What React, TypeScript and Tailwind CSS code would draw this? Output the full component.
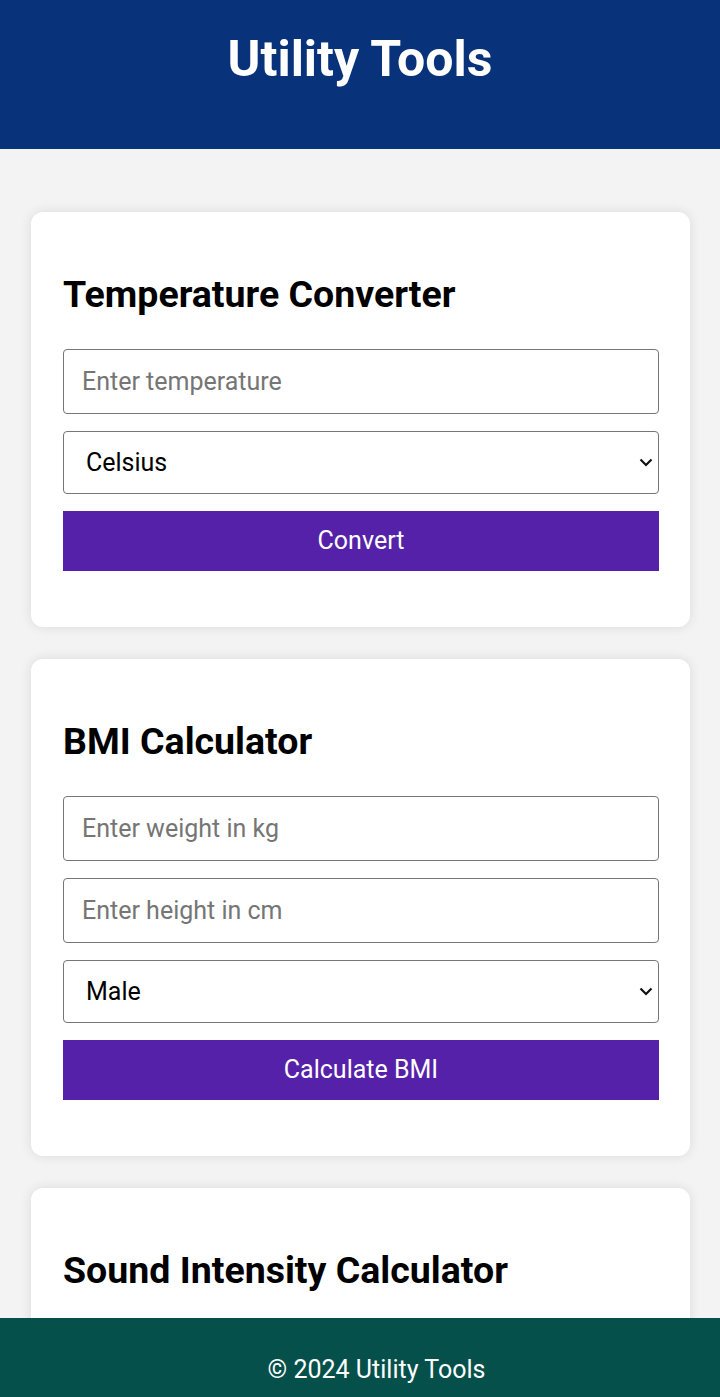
import { useState } from 'react'

const inputCls =
  'block w-full h-[65px] px-[18px] border border-[#767676] rounded-[4px] bg-white text-[25px] text-black placeholder:text-[#757575] outline-none'
const selectCls =
  'block w-full h-[63px] pl-[22px] pr-10 border border-[#767676] rounded-[4px] bg-white text-[25px] text-black appearance-none'
const buttonCls =
  'block w-full h-[60px] bg-[#5521a9] text-white text-[25px] leading-[30px] cursor-pointer'

function Card({ title, children }: { title: string; children: React.ReactNode }) {
  return (
    <section className="bg-white rounded-xl shadow-[0_0_12px_rgba(0,0,0,0.1)] pl-8 pr-[31px] pt-[61px] pb-[56px]">
      <h2 className="text-[37.5px] font-bold leading-[43px] text-black mb-[33px]">{title}</h2>
      <div className="flex flex-col gap-[17px]">{children}</div>
    </section>
  )
}

function Select({
  value,
  onChange,
  options,
}: {
  value: string
  onChange: (v: string) => void
  options: [string, string][]
}) {
  return (
    <div className="relative">
      <select value={value} onChange={(e) => onChange(e.target.value)} className={selectCls}>
        {options.map(([v, label]) => (
          <option key={v} value={v}>
            {label}
          </option>
        ))}
      </select>
      <svg
        className="pointer-events-none absolute right-[6px] top-[27px]"
        width="14"
        height="9"
        viewBox="0 0 14 9"
        fill="none"
      >
        <path d="M1.5 1.5 L7 7 L12.5 1.5" stroke="#111" strokeWidth="2.2" />
      </svg>
    </div>
  )
}

export default function App() {
  const [temp, setTemp] = useState('')
  const [unit, setUnit] = useState('celsius')
  const [weight, setWeight] = useState('')
  const [height, setHeight] = useState('')
  const [gender, setGender] = useState('male')

  return (
    <div className="min-h-[1397px] bg-[#f3f3f3] font-['Roboto',sans-serif]">
      <header className="h-[149px] bg-[#08327a] flex justify-center pt-[30px]">
        <h1 className="text-[50px] font-bold text-white leading-[58px]">Utility Tools</h1>
      </header>

      <main className="pl-[31px] pr-[30px] pt-[63px] pb-[100px] flex flex-col gap-8">
        <Card title="Temperature Converter">
          <input
            type="text"
            value={temp}
            onChange={(e) => setTemp(e.target.value)}
            placeholder="Enter temperature"
            className={inputCls}
          />
          <Select
            value={unit}
            onChange={setUnit}
            options={[
              ['celsius', 'Celsius'],
              ['fahrenheit', 'Fahrenheit'],
            ]}
          />
          <button type="button" className={buttonCls}>
            Convert
          </button>
        </Card>

        <Card title="BMI Calculator">
          <input
            type="text"
            value={weight}
            onChange={(e) => setWeight(e.target.value)}
            placeholder="Enter weight in kg"
            className={inputCls}
          />
          <input
            type="text"
            value={height}
            onChange={(e) => setHeight(e.target.value)}
            placeholder="Enter height in cm"
            className={inputCls}
          />
          <Select
            value={gender}
            onChange={setGender}
            options={[
              ['male', 'Male'],
              ['female', 'Female'],
            ]}
          />
          <button type="button" className={buttonCls}>
            Calculate BMI
          </button>
        </Card>

        <Card title="Sound Intensity Calculator">
          <input type="text" placeholder="Enter sound intensity" className={inputCls} />
          <button type="button" className={buttonCls}>
            Calculate
          </button>
        </Card>
      </main>

      <footer className="fixed bottom-0 left-0 right-0 h-[79px] bg-[#06504c] flex justify-center pt-[37px] pl-[33px]">
        <p className="text-[25px] leading-[30px] text-white">© 2024 Utility Tools</p>
      </footer>
    </div>
  )
}
